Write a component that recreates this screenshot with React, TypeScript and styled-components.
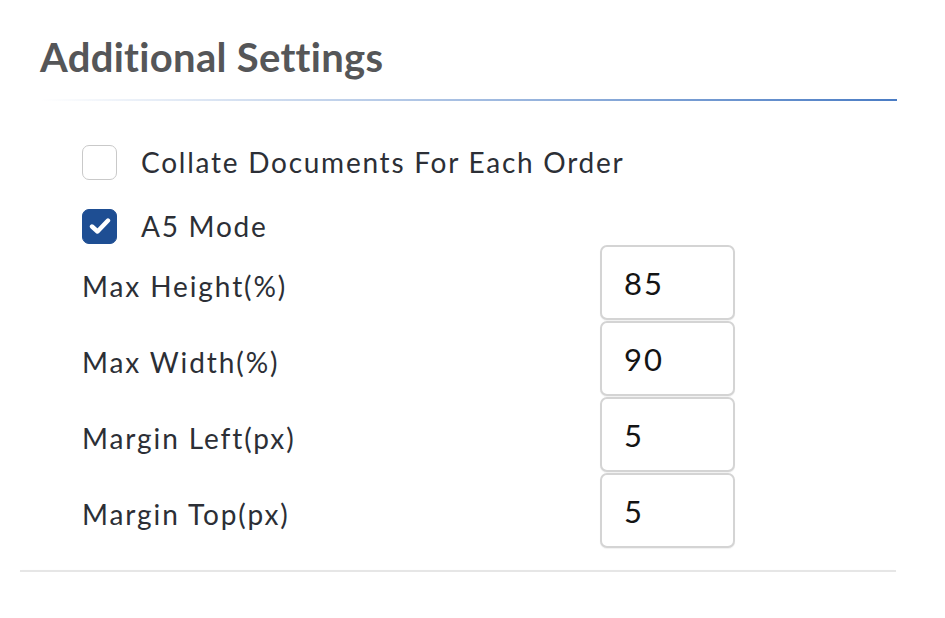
import React, { useState } from 'react'
import styled, { createGlobalStyle } from 'styled-components'

const GlobalStyle = createGlobalStyle`
	html, body {
		margin: 0;
		padding: 0;
		background: #fff;
		font-family: Lato, 'Open Sans', sans-serif;
	}
`

const Panel = styled.section`
	width: 945px;
	padding: 30px 0 0 20px;
	box-sizing: border-box;
`

const Title = styled.h2`
	margin: 0 0 0 20px;
	font-size: 40px;
	font-weight: 700;
	letter-spacing: 0.3px;
	color: #555658;
	line-height: 54px;
`

const TitleRule = styled.div`
	margin: 15px 0 0 20px;
	width: 857px;
	height: 2px;
	background: linear-gradient(to right, rgba(74, 124, 196, 0), #4a7cc4);
`

const Body = styled.div`
	padding: 43px 0 0 62px;
	width: 653px;
`

const CheckRow = styled.label`
	display: flex;
	align-items: center;
	gap: 24px;
	height: 36px;
	margin-bottom: 28px;
	font-size: 28px;
	letter-spacing: 1.75px;
	color: #2c2f36;
	cursor: pointer;
`

const Box = styled.span<{ $checked: boolean }>`
	flex: none;
	width: 33px;
	height: 33px;
	border-radius: 7px;
	border: 1.5px solid ${p => (p.$checked ? '#1e4e93' : '#c9c9c9')};
	background: ${p => (p.$checked ? '#1e4e93' : '#fff')};
	display: flex;
	align-items: center;
	justify-content: center;
`

const FieldRow = styled.div`
	display: flex;
	align-items: center;
	justify-content: space-between;
	height: 75px;
	margin-bottom: 1px;
	&:first-of-type {
		margin-top: -27px;
	}
`

const FieldLabel = styled.span`
	font-size: 28px;
	letter-spacing: 1.9px;
	color: #2c2f36;
	padding-top: 6px;
`

const Input = styled.input`
	width: 135px;
	height: 75px;
	box-sizing: border-box;
	border: 2px solid #d4d4d4;
	border-radius: 7px;
	box-shadow: 0 1px 1px rgba(0, 0, 0, 0.06);
	padding: 0 0 0 22px;
	font-family: Lato, sans-serif;
	font-size: 31px;
	letter-spacing: 2px;
	color: #141414;
	outline: none;
`

const BottomRule = styled.div`
	margin-top: 22px;
	width: 876px;
	height: 2px;
	background: #e6e6e6;
	box-shadow: 0 3px 6px rgba(0, 0, 0, 0.05);
`

function Checkbox({ label, checked, onToggle }: { label: string; checked: boolean; onToggle: () => void }) {
	return (
		<CheckRow onClick={onToggle}>
			<Box $checked={checked}>
				{checked && (
					<svg width="22" height="18" viewBox="0 0 22 18">
						<path d="M3 9.5 L8.5 14.5 L19 3.5" fill="none" stroke="#fff" strokeWidth="4.4" strokeLinecap="round" strokeLinejoin="round" />
					</svg>
				)}
			</Box>
			{label}
		</CheckRow>
	)
}

const fields = [
	{ label: 'Max Height(%)', value: '85' },
	{ label: 'Max Width(%)', value: '90' },
	{ label: 'Margin Left(px)', value: '5' },
	{ label: 'Margin Top(px)', value: '5' }
]

export default function App() {
	const [collate, setCollate] = useState(false)
	const [a5, setA5] = useState(true)

	return (
		<>
			<GlobalStyle />
			<Panel>
				<Title>Additional Settings</Title>
				<TitleRule />
				<Body>
					<Checkbox label="Collate Documents For Each Order" checked={collate} onToggle={() => setCollate(!collate)} />
					<Checkbox label="A5 Mode" checked={a5} onToggle={() => setA5(!a5)} />
					{fields.map(f => (
						<FieldRow key={f.label}>
							<FieldLabel>{f.label}</FieldLabel>
							<Input defaultValue={f.value} />
						</FieldRow>
					))}
				</Body>
				<BottomRule />
			</Panel>
		</>
	)
}
